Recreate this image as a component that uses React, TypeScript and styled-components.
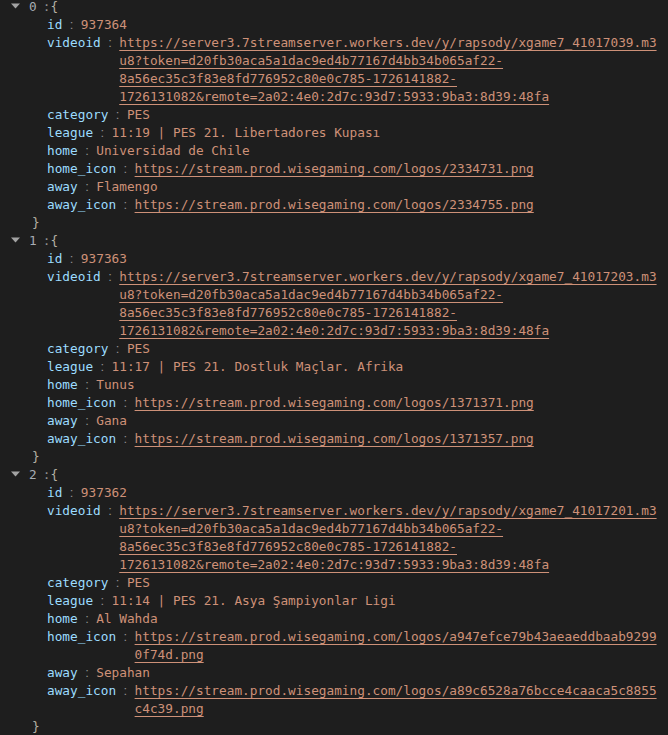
import React from "react";
import styled, { createGlobalStyle } from "styled-components";

const Global = createGlobalStyle`
  html, body { margin: 0; padding: 0; background: #1e1e1e; }
  body { font-family: "DejaVu Sans Mono", "Liberation Mono", monospace; }
`;

type Entry = {
  id: number;
  videoid: string;
  category: string;
  league: string;
  home: string;
  home_icon: string;
  away: string;
  away_icon: string;
};

const data: Entry[] = [
  {
    id: 937364,
    videoid:
      "https://server3.7streamserver.workers.dev/y/rapsody/xgame7_41017039.m3u8?token=d20fb30aca5a1dac9ed4b77167d4bb34b065af22-8a56ec35c3f83e8fd776952c80e0c785-1726141882-1726131082&remote=2a02:4e0:2d7c:93d7:5933:9ba3:8d39:48fa",
    category: "PES",
    league: "11:19 | PES 21. Libertadores Kupası",
    home: "Universidad de Chile",
    home_icon: "https://stream.prod.wisegaming.com/logos/2334731.png",
    away: "Flamengo",
    away_icon: "https://stream.prod.wisegaming.com/logos/2334755.png",
  },
  {
    id: 937363,
    videoid:
      "https://server3.7streamserver.workers.dev/y/rapsody/xgame7_41017203.m3u8?token=d20fb30aca5a1dac9ed4b77167d4bb34b065af22-8a56ec35c3f83e8fd776952c80e0c785-1726141882-1726131082&remote=2a02:4e0:2d7c:93d7:5933:9ba3:8d39:48fa",
    category: "PES",
    league: "11:17 | PES 21. Dostluk Maçlar. Afrika",
    home: "Tunus",
    home_icon: "https://stream.prod.wisegaming.com/logos/1371371.png",
    away: "Gana",
    away_icon: "https://stream.prod.wisegaming.com/logos/1371357.png",
  },
  {
    id: 937362,
    videoid:
      "https://server3.7streamserver.workers.dev/y/rapsody/xgame7_41017201.m3u8?token=d20fb30aca5a1dac9ed4b77167d4bb34b065af22-8a56ec35c3f83e8fd776952c80e0c785-1726141882-1726131082&remote=2a02:4e0:2d7c:93d7:5933:9ba3:8d39:48fa",
    category: "PES",
    league: "11:14 | PES 21. Asya Şampiyonlar Ligi",
    home: "Al Wahda",
    home_icon:
      "https://stream.prod.wisegaming.com/logos/a947efce79b43aeaeddbaab92990f74d.png",
    away: "Sepahan",
    away_icon:
      "https://stream.prod.wisegaming.com/logos/a89c6528a76bcce4caaca5c8855c4c39.png",
  },
];

const Viewer = styled.div`
  margin-top: -2px;
  padding: 0 8px 0 0;
  font-size: 12.75px;
  line-height: 18px;
  color: #d4d4d4;
`;

const Block = styled.div`
  display: flex;
  flex-direction: column;
`;

const Header = styled.div`
  display: flex;
  align-items: center;
  height: 18px;
`;

const Toggle = styled.span`
  display: flex;
  align-items: center;
  width: 29px;
  flex: none;
  padding-left: 11px;
  box-sizing: border-box;
  margin-top: -3px;
`;

const Index = styled.span`
  color: #a7adb3;
`;

const Punct = styled.span<{ $gap?: number }>`
  color: #8f8f8f;
  margin-left: ${(p) => p.$gap ?? 0}px;
`;

const Brace = styled.span`
  color: #b4b0a4;
`;

const Row = styled.div`
  display: flex;
  align-items: flex-start;
  padding-left: 47px;
`;

const Key = styled.span`
  flex: none;
  color: #9cdcfe;
`;

const Sep = styled.span`
  flex: none;
  width: 18.5px;
  text-align: center;
  color: #8f8f8f;
  font-family: "Liberation Sans", sans-serif;
  font-size: 13px;
`;

const Value = styled.span`
  flex: 1;
  min-width: 0;
  color: #ce9178;
  overflow-wrap: anywhere;
`;

const Link = styled.a`
  color: #ce9178;
  text-decoration: underline;
  text-underline-offset: 3px;
  text-decoration-thickness: 1px;
`;

const Close = styled.div`
  padding-left: 32px;
  color: #b4b0a4;
  height: 18px;
`;

const Triangle = () => (
  <svg width="9" height="6" viewBox="0 0 9 6" aria-hidden="true">
    <path d="M0 0.5 H9 L4.5 5.5 Z" fill="#a3a3a3" />
  </svg>
);

const isLink = (v: unknown) => typeof v === "string" && v.startsWith("https://");

const Field = ({ name, value }: { name: string; value: string | number }) => (
  <Row>
    <Key>{name}</Key>
    <Sep>:</Sep>
    <Value>{isLink(value) ? <Link href="#">{value}</Link> : value}</Value>
  </Row>
);

export default function App() {
  return (
    <>
      <Global />
      <Viewer>
        {data.map((item, i) => (
          <Block key={i}>
            <Header>
              <Toggle>
                <Triangle />
              </Toggle>
              <Index>{i}</Index>
              <Punct $gap={6}>:</Punct>
              <Brace>{"{"}</Brace>
            </Header>
            {(Object.keys(item) as (keyof Entry)[]).map((k) => (
              <Field key={k} name={k} value={item[k]} />
            ))}
            <Close>{"}"}</Close>
          </Block>
        ))}
      </Viewer>
    </>
  );
}
